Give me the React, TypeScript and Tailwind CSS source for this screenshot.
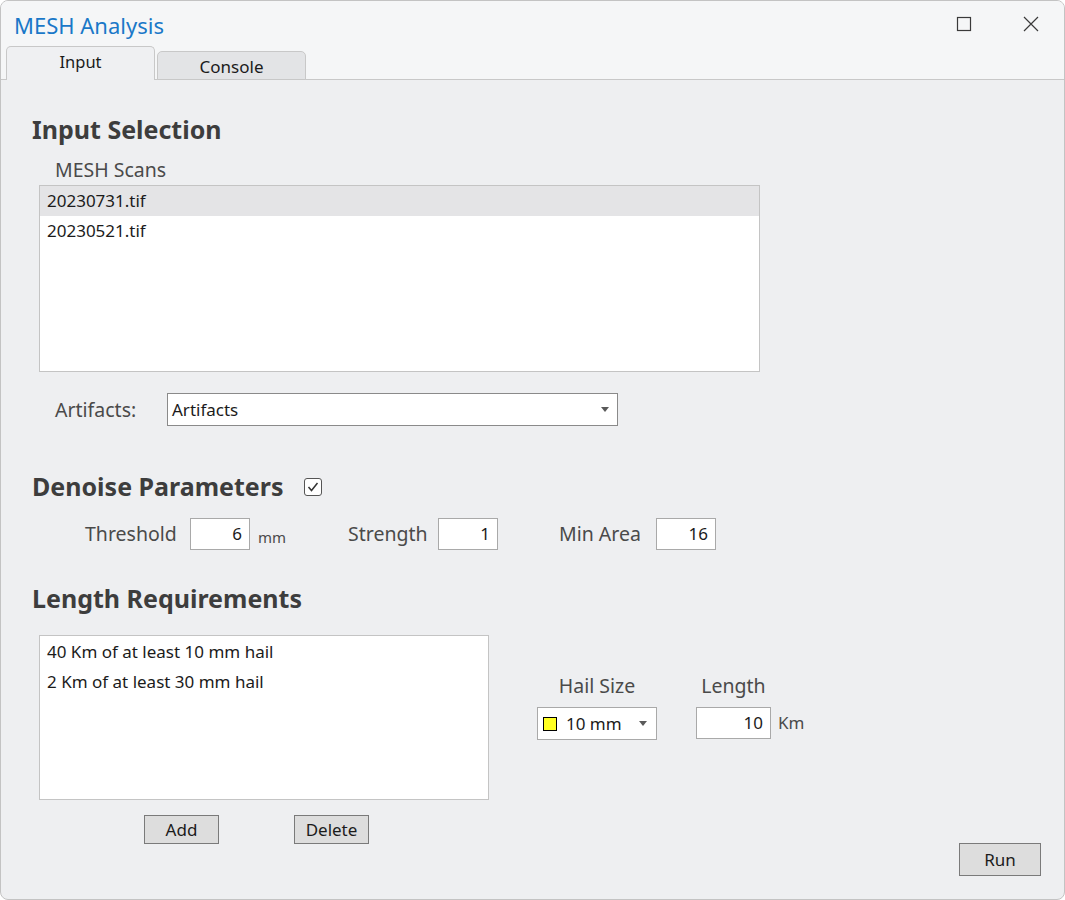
import { useState } from "react";

const font = { fontFamily: '"Noto Sans", "Open Sans", sans-serif' };

function Caret({ className = "" }: { className?: string }) {
  return (
    <svg width="8" height="5" viewBox="0 0 8 5" className={className}>
      <path d="M0 0 L8 0 L4 5 Z" fill="#5a5a5a" />
    </svg>
  );
}

function NumBox({ value, w = "w-[60px]" }: { value: string; w?: string }) {
  return (
    <div
      className={`${w} h-[32px] border border-[#a9a9a9] bg-white flex items-center justify-end pr-[7px] text-[17px] text-[#1b1b1b]`}
    >
      {value}
    </div>
  );
}

export default function App() {
  const [selected, setSelected] = useState(0);
  const scans = ["20230731.tif", "20230521.tif"];
  const reqs = ["40 Km of at least 10 mm hail", "2 Km of at least 30 mm hail"];

  return (
    <div style={font} className="w-[1065px] h-[900px] bg-white">
      <div className="w-[1065px] h-[900px] border border-[#c3c3c3] rounded-lg overflow-hidden bg-[#eeeff1] flex flex-col">
        {/* Title bar */}
        <div className="bg-[#f5f6f7] border-b border-[#c8c8c8]">
          <div className="h-[46px] flex items-center pl-[13px] pr-[24px]">
            <span className="text-[22px] text-[#1a78c8] leading-none mt-[2px]">MESH Analysis</span>
            <div className="ml-auto flex items-center gap-[50px]">
              <svg width="16" height="16" viewBox="0 0 16 16">
                <rect x="1.5" y="1.5" width="13" height="13" fill="none" stroke="#3a3a3a" strokeWidth="1.2" />
              </svg>
              <svg width="18" height="18" viewBox="0 0 18 18">
                <path d="M2 2 L16 16 M16 2 L2 16" stroke="#3a3a3a" strokeWidth="1.2" />
              </svg>
            </div>
          </div>
          <div className="flex items-end pl-[5px] gap-[2px] h-[33px] -mb-px">
            <div className="w-[149px] h-[34px] border border-[#c8c8c8] border-b-0 rounded-t-[5px] bg-[#eff0f2] flex items-center justify-center text-[16.5px] text-[#1b1b1b] pb-[3px]">
              Input
            </div>
            <div className="w-[149px] h-[29px] border border-[#c8c8c8] rounded-t-[5px] bg-[#e3e4e6] flex items-center justify-center text-[17px] text-[#1b1b1b] pt-[2px]">
              Console
            </div>
          </div>
        </div>

        {/* Content */}
        <div className="flex-1 flex flex-col pl-[31px] text-[#444]">
          <div className="mt-[34px] h-[32px] flex items-center text-[25px] font-bold text-[#3d3d3d]">
            Input Selection
          </div>
          <div className="mt-[12px] h-[24px] flex items-center pl-[23px] text-[19.5px] text-[#4a4a4a]">
            MESH Scans
          </div>
          <div className="mt-[3px] ml-[7px] w-[721px] h-[187px] border border-[#c4c4c4] bg-white">
            {scans.map((s, i) => (
              <div
                key={s}
                onClick={() => setSelected(i)}
                className={`h-[30px] flex items-center pl-[7px] text-[17px] text-[#1b1b1b] ${
                  selected === i ? "bg-[#e4e4e6]" : ""
                }`}
              >
                {s}
              </div>
            ))}
          </div>

          <div className="mt-[21px] h-[33px] flex items-center">
            <span className="pl-[23px] w-[135px] text-[19.5px] text-[#4a4a4a]">Artifacts:</span>
            <div className="w-[451px] h-[33px] border border-[#8a8a8a] bg-white flex items-center pl-[4px] pr-[8px] text-[17px] text-[#1b1b1b]">
              Artifacts
              <Caret className="ml-auto" />
            </div>
          </div>

          <div className="mt-[45px] h-[32px] flex items-center text-[25px] font-bold text-[#3d3d3d]">
            Denoise Parameters
            <div className="ml-[20px] w-[18px] h-[18px] border border-[#555] rounded-[3px] bg-white flex items-center justify-center">
              <svg width="12" height="10" viewBox="0 0 12 10">
                <path d="M1.5 5 L4.5 8.5 L10.5 1" fill="none" stroke="#333" strokeWidth="1.5" />
              </svg>
            </div>
          </div>

          <div className="mt-[15px] h-[32px] flex items-center text-[19.5px] text-[#4a4a4a]">
            <span className="ml-[53px] w-[105px]">Threshold</span>
            <NumBox value="6" />
            <span className="ml-[8px] text-[15px] mt-[6px] w-[90px]">mm</span>
            <span className="w-[90px]">Strength</span>
            <NumBox value="1" />
            <span className="ml-[61px] w-[97px]">Min Area</span>
            <NumBox value="16" />
          </div>

          <div className="mt-[33px] h-[32px] flex items-center text-[25px] font-bold text-[#3d3d3d]">
            Length Requirements
          </div>

          <div className="mt-[20px] flex">
            <div className="ml-[7px] w-[450px] h-[165px] border border-[#c4c4c4] bg-white pt-[1px]">
              {reqs.map((r) => (
                <div key={r} className="h-[30px] flex items-center pl-[7px] text-[17px] text-[#1b1b1b]">
                  {r}
                </div>
              ))}
            </div>
            <div className="ml-[48px] mt-[37px] flex gap-[39px]">
              <div className="flex flex-col items-center">
                <span className="h-[28px] flex items-center text-[19.5px] text-[#4a4a4a]">Hail Size</span>
                <div className="mt-[7px] w-[120px] h-[33px] border border-[#a9a9a9] bg-white flex items-center pl-[5px] pr-[9px] text-[17px] text-[#1b1b1b]">
                  <span className="w-[14px] h-[14px] border border-black bg-[#ffff22]" />
                  <span className="ml-[9px]">10 mm</span>
                  <Caret className="ml-auto" />
                </div>
              </div>
              <div className="flex flex-col items-start">
                <span className="h-[28px] w-[75px] flex items-center justify-center text-[19.5px] text-[#4a4a4a]">Length</span>
                <div className="mt-[7px] flex items-center">
                  <NumBox value="10" w="w-[75px]" />
                  <span className="ml-[7px] text-[17px] text-[#4a4a4a]">Km</span>
                </div>
              </div>
            </div>
          </div>

          <div className="mt-[15px] flex">
            <button className="ml-[112px] w-[75px] h-[29px] border border-[#7a7a7a] bg-[#dddddd] text-[17px] text-[#1b1b1b] leading-none">
              Add
            </button>
            <button className="ml-[75px] w-[75px] h-[29px] border border-[#7a7a7a] bg-[#dddddd] text-[17px] text-[#1b1b1b] leading-none">
              Delete
            </button>
          </div>

          <div className="-mt-px flex justify-end pr-[23px]">
            <button className="w-[82px] h-[33px] border border-[#7a7a7a] bg-[#dddddd] text-[17px] text-[#1b1b1b] leading-none">
              Run
            </button>
          </div>
        </div>
      </div>
    </div>
  );
}
